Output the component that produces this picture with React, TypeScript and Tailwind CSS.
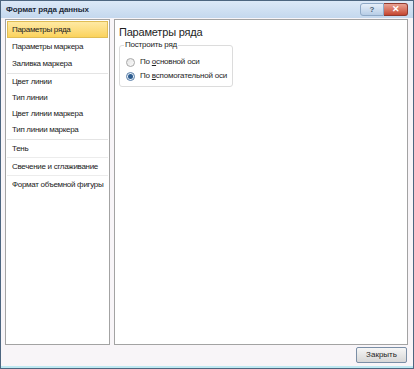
import React from "react";

const font = { fontFamily: '"Liberation Sans", Arial, sans-serif' };

// each group: items, item height, gap class above it
const groups: { items: string[]; h: string; sep: string }[] = [
  { items: ["Параметры ряда", "Параметры маркера", "Заливка маркера"], h: "h-[17px]", sep: "" },
  { items: ["Цвет линии", "Тип линии", "Цвет линии маркера", "Тип линии маркера"], h: "h-[16px]", sep: "mt-[1px] border-t border-[#e4e4e4] pt-[0px]" },
  { items: ["Тень"], h: "h-[17px]", sep: "mt-[1px] border-t border-[#e4e4e4]" },
  { items: ["Свечение и сглаживание"], h: "h-[17px]", sep: "border-t border-[#ececec]" },
  { items: ["Формат объемной фигуры"], h: "h-[17px]", sep: "border-t border-[#ececec]" },
];

function Radio({ checked, label }: { checked?: boolean; label: React.ReactNode }) {
  return (
    <div className="flex h-[14px] items-center gap-[5px] whitespace-nowrap">
      <span
        className={
          "flex h-[9px] w-[9px] items-center justify-center rounded-full border " +
          (checked ? "border-[#5a7fa8] bg-[#e8f0f8]" : "border-[#a7a7a7] bg-gradient-to-br from-[#e4e4e4] to-[#fafafa]")
        }
      >
        {checked ? <span className="h-[5px] w-[5px] rounded-full bg-[#2d5c8f]" /> : null}
      </span>
      <span className="text-[8px] tracking-[-0.2px] text-[#1e1e1e]">{label}</span>
    </div>
  );
}

export default function App() {
  return (
    <div
      className="flex h-[369px] w-[414px] flex-col border border-[#4d6680] bg-[#f8f5f8]"
      style={font}
    >
      {/* title bar */}
      <div className="flex h-[17px] shrink-0 items-center justify-between bg-gradient-to-b from-[#dce9f7] to-[#c4d8ee] pl-[5px] pr-[5px]">
        <span className="text-[8px] font-bold tracking-[-0.1px] text-[#1d2b3a]">Формат ряда данных</span>
        <div className="flex h-[13px] items-stretch">
          <div className="flex w-[24px] items-center justify-center rounded-l-[3px] border border-[#8fa9c6] bg-gradient-to-b from-[#e6eff9] to-[#b7cde6] text-[8px] font-bold text-[#4a5d72]">
            ?
          </div>
          <div className="flex w-[24px] items-center justify-center rounded-r-[3px] border border-l-0 border-[#8f3b30] bg-gradient-to-b from-[#e9a293] to-[#c4452f] text-[9px] font-bold text-white">
            ✕
          </div>
        </div>
      </div>

      {/* body */}
      <div className="mt-[1px] flex h-[326px] shrink-0 gap-[4px] pl-[4px] pr-[5px]">
        <div className="flex w-[105px] flex-col border border-[#a3a3a3] bg-white p-[1px]">
          {groups.map((g, gi) => (
            <div key={gi} className={g.sep}>
              {g.items.map((item, ii) => {
                const sel = gi === 0 && ii === 0;
                return (
                  <div
                    key={item}
                    className={
                      g.h +
                      " flex items-center whitespace-nowrap px-[4px] text-[8px] tracking-[-0.3px] text-[#222] " +
                      (sel
                        ? "border border-[#e0bd55] bg-gradient-to-b from-[#fee9a3] to-[#fbd35b]"
                        : "border border-transparent")
                    }
                  >
                    {item}
                  </div>
                );
              })}
            </div>
          ))}
        </div>

        <div className="flex-1 border border-[#a3a3a3] bg-white px-[4px] pt-[5px]">
          <div className="whitespace-nowrap text-[11px] leading-[14px] tracking-[-0.2px] text-[#1e1e1e]">Параметры ряда</div>
          <div className="relative mt-[6px] h-[42px] w-[114px] rounded-[3px] border border-[#dcdcdc] pl-[6px] pt-[9px]">
            <span className="absolute left-[4px] top-[-6px] whitespace-nowrap bg-white px-[1px] text-[8px] leading-[10px] tracking-[-0.2px] text-[#1e1e1e]">
              Построить ряд
            </span>
            <Radio label={<>По <u>о</u>сновной оси</>} />
            <Radio checked label={<>По <u>в</u>спомогательной оси</>} />
          </div>
        </div>
      </div>

      {/* footer */}
      <div className="flex h-[18px] shrink-0 items-center justify-end pr-[6px] pt-[1px]">
        <button className="flex h-[16px] w-[51px] items-center justify-center rounded-[2px] border border-[#7a8ea6] bg-gradient-to-b from-[#f6f6f6] to-[#d7d7d7] text-[8px] text-[#1e1e1e]">
          Закрыть
        </button>
      </div>
      <div className="flex-1" />
      <div className="h-[2px] shrink-0 bg-[#bfe9f2]" />
    </div>
  );
}
